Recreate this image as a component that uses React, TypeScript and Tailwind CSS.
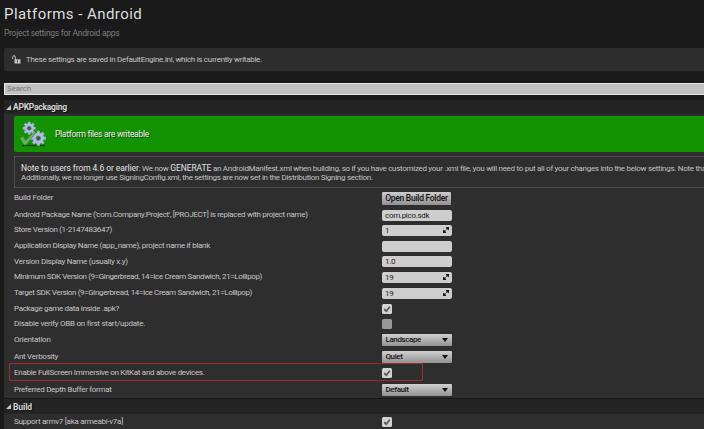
import type { ReactNode } from "react";

function Check({ checked = true }: { checked?: boolean }) {
  return (
    <div className={`flex size-[10px] items-center justify-center rounded-[1.5px] ${checked ? "bg-[#d2d2d2]" : "bg-[#989898]"}`}>
      {checked && (
        <svg width="10" height="10" viewBox="0 0 10 10" fill="none">
          <path d="M2.2 5.2 L4.2 7.2 L7.8 2.7" stroke="#555" strokeWidth="1.7" />
        </svg>
      )}
    </div>
  );
}

function Input({ value = "", spin = false }: { value?: string; spin?: boolean }) {
  return (
    <div className="flex h-[11px] w-[70px] items-center justify-between rounded-[2px] bg-[#cecece] pr-[3px] pl-[3px] text-[8px] leading-[11px] tracking-[-0.3px] text-[#1c1c1c]">
      <span>{value}</span>
      {spin && (
        <svg width="6" height="6" viewBox="0 0 6 6" fill="#161616">
          <path d="M2.6 0H6V3.4L4.8 2.3L3.9 3L3 2.1L3.7 1.2Z M3.4 6H0V2.6L1.2 3.7L2.1 3L3 3.9L2.3 4.8Z" />
        </svg>
      )}
    </div>
  );
}

function Select({ value }: { value: string }) {
  return (
    <div className="flex h-3 w-[70px] items-center justify-between rounded-[1px] bg-linear-to-b from-[#d0d0d0] to-[#929292] pr-[4px] pl-[3.5px] text-[8px] leading-3 font-medium tracking-[-0.4px] text-[#141414]">
      <span>{value}</span>
      <svg width="6" height="4" viewBox="0 0 6 4" fill="#111">
        <path d="M0 0H6L3 4Z" />
      </svg>
    </div>
  );
}

function Header({ title, className, spacing }: { title: string; className: string; spacing: string }) {
  return (
    <div className={`flex shrink-0 items-center bg-[#242424] pl-[2px] ${className}`}>
      <svg width="5" height="5" viewBox="0 0 5 5" fill="#c8c8c8">
        <path d="M5 0V5H0Z" />
      </svg>
      <span className={`ml-[2px] text-[8.5px] leading-3 font-bold text-[#d4d4d4] [text-shadow:1px_1px_0_#111] ${spacing}`}>{title}</span>
    </div>
  );
}

const rows: { label: string; height: string; spacing: string; control: ReactNode }[] = [
  {
    label: "Build Folder", height: "h-5", spacing: "tracking-[-0.23px]",
    control: (
      <div className="flex h-[13px] w-[69px] items-center justify-center rounded-[1px] bg-linear-to-b from-[#cccccc] to-[#929292] text-[8.5px] leading-[13px] font-medium tracking-[-0.28px] text-[#101010]">Open Build Folder</div>
    ),
  },
  { label: "Android Package Name ('com.Company.Project', [PROJECT] is replaced with project name)", height: "h-[14px]", spacing: "tracking-[-0.32px]", control: <Input value="com.pico.sdk" /> },
  { label: "Store Version (1-2147483647)", height: "h-4", spacing: "tracking-[-0.32px]", control: <Input value="1" spin /> },
  { label: "Application Display Name (app_name), project name if blank", height: "h-4", spacing: "tracking-[-0.31px]", control: <Input /> },
  { label: "Version Display Name (usually x.y)", height: "h-[15px]", spacing: "tracking-[-0.25px]", control: <Input value="1.0" /> },
  { label: "Minimum SDK Version (9=Gingerbread, 14=Ice Cream Sandwich, 21=Lollipop)", height: "h-4", spacing: "tracking-[-0.37px]", control: <Input value="19" spin /> },
  { label: "Target SDK Version (9=Gingerbread, 14=Ice Cream Sandwich, 21=Lollipop)", height: "h-4", spacing: "tracking-[-0.36px]", control: <Input value="19" spin /> },
  { label: "Package game data inside .apk?", height: "h-[15px]", spacing: "tracking-[-0.32px]", control: <Check /> },
  { label: "Disable verify OBB on first start/update.", height: "h-4", spacing: "tracking-[-0.24px]", control: <Check checked={false} /> },
  { label: "Orientation", height: "h-4", spacing: "tracking-[-0.25px]", control: <Select value="Landscape" /> },
  { label: "Ant Verbosity", height: "h-[17px]", spacing: "tracking-[-0.28px]", control: <Select value="Quiet" /> },
  { label: "Enable FullScreen Immersive on KitKat and above devices.", height: "h-4", spacing: "tracking-[-0.29px]", control: <Check /> },
  { label: "Preferred Depth Buffer format", height: "h-[17px]", spacing: "tracking-[-0.28px]", control: <Select value="Default" /> },
];

function Row({ label, height, spacing, control }: (typeof rows)[number]) {
  return (
    <div className={`flex shrink-0 items-center pl-[10px] ${height}`}>
      <div className={`w-[368px] text-[8px] leading-[10px] text-[#c6c6c6] ${spacing}`}>{label}</div>
      {control}
    </div>
  );
}

function Gear({ x, y, scale }: { x: number; y: number; scale: number }) {
  return (
    <g transform={`translate(${x} ${y}) scale(${scale})`}>
      {[0, 45, 90, 135].map((a) => (
        <rect key={a} x="-1.4" y="-7" width="2.8" height="14" fill="#a9b0dc" transform={`rotate(${a})`} />
      ))}
      <circle r="5.2" fill="#b2b9e2" />
      <circle r="2.1" fill="#1b6d18" stroke="#7279a5" strokeWidth=".7" />
    </g>
  );
}

export default function App() {
  return (
    <div className="relative flex h-[429px] w-[704px] flex-col overflow-hidden bg-[#1a1a1a] pl-1 font-[Roboto,sans-serif] whitespace-nowrap">
      <h1 className="mt-[5px] h-[19px] shrink-0 text-[15px] leading-[19px] tracking-[0.45px] text-[#dedede]">Platforms - Android</h1>
      <p className="mt-[3px] h-3 shrink-0 text-[8.5px] leading-3 tracking-[-0.27px] text-[#7c7c7c]">Project settings for Android apps</p>
      <div className="mt-[9px] flex h-[23px] shrink-0 items-center rounded-l-[2px] bg-[#2d2d2d] pl-2">
        <svg width="9" height="9" viewBox="0 0 9 9" fill="none">
          <path d="M.7 4V2Q.7.7 2 .7T3.3 2V5" stroke="#bbb" strokeWidth="1" />
          <path d="M2.5 4.3H8.5V8.5H2.5Z" fill="#c4c4c4" />
          <path d="M5.5 5.4V7.4" stroke="#444" strokeWidth="1" />
        </svg>
        <span className="ml-[5px] text-[8px] leading-[10px] tracking-[-0.28px] text-[#c6c6c6]">These settings are saved in DefaultEngine.ini, which is currently writable.</span>
      </div>
      <div className="mt-3 flex h-3 shrink-0 items-center rounded-l-[1px] border border-r-0 border-[#e6e6e6] bg-[#c1c1c1] pl-[2px] text-[8px] leading-[10px] tracking-[-0.1px] text-[#777]">Search</div>
      <Header title="APKPackaging" className="mt-[5px] h-[14px]" spacing="tracking-[-0.25px]" />
      <div className="flex shrink-0 flex-col bg-[#2e2e2e] pt-[2px] pl-[10px]">
        <div className="flex h-9 items-center rounded-l-[2px] bg-[#149302] pl-[5px]">
          <svg width="27" height="27" viewBox="0 0 27 27">
            <path d="M3 24.5H26" stroke="#0b4808" strokeWidth="1.5" />
            <Gear x={10.2} y={7.2} scale={0.92} />
            <Gear x={19.3} y={17.2} scale={1.08} />
            <path d="M1 17L4 15.5L6.5 19.5L15.5 10.5L17 11.5L7 24H5Z" fill="#69b168" stroke="#317d32" strokeWidth=".5" />
          </svg>
          <span className="ml-[9px] text-[8.5px] leading-3 tracking-[-0.28px] text-[#eee] [text-shadow:1px_1px_0_#174711]">Platform files are writeable</span>
        </div>
        <div className="mt-1 flex h-8 flex-col justify-center overflow-hidden border border-r-0 border-[#4b4b4b] pt-[2px] pl-[6px] text-[8px] text-[#c2c2c2]">
          <p className="h-[9px] leading-[9px] tracking-[-0.29px]"><span className="text-[8.5px] tracking-[-0.08px] text-[#e3e3e3]">Note to users from 4.6 or earlier</span>: We now <span className="text-[8.5px] tracking-[-0.08px] text-[#e3e3e3]">GENERATE</span> an AndroidManifest.xml when building, so if you have customized your .xml file, you will need to put all of your changes into the below settings. Note tha</p>
          <p className="h-[9px] leading-[9px] tracking-[-0.29px]">Additionally, we no longer use SigningConfig.xml, the settings are now set in the Distribution Signing section.</p>
        </div>
      </div>
      <div className="flex shrink-0 flex-col bg-[#2e2e2e]">
        {rows.map((row) => <Row key={row.label} {...row} />)}
      </div>
      <Header title="Build" className="h-4 border-t border-[#171717]" spacing="tracking-[-0.1px]" />
      <div className="bg-[#2e2e2e]">
        <Row label="Support armv7 [aka armeabi-v7a]" height="h-4" spacing="tracking-[-0.28px]" control={<Check />} />
      </div>
      <div className="absolute top-[363px] left-[9px] h-[18px] w-[414px] border border-[#a3282b]" />
    </div>
  );
}
